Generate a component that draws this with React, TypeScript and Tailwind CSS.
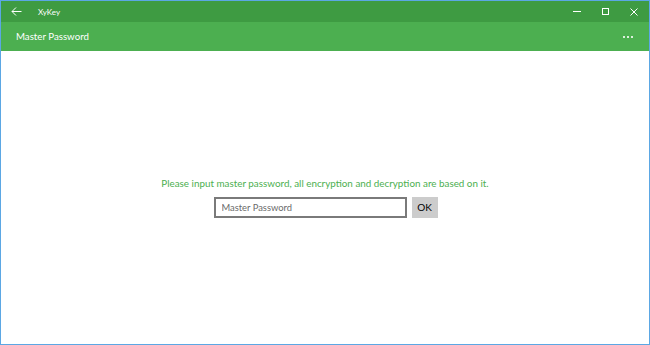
import * as React from 'react';

export default function App() {
  const [pw, setPw] = React.useState('');
  return (
    <div
      className="w-[650px] h-[345px] flex flex-col border border-[#5ba7e4] bg-white overflow-hidden"
      style={{ fontFamily: 'Lato, "Noto Sans", sans-serif' }}
    >
      {/* title bar */}
      <div className="h-[21px] shrink-0 bg-[#3e9b42] flex items-center text-white">
        <div className="w-[30px] flex justify-center pl-[1px]">
          <svg width="11" height="9" viewBox="0 0 11 9" fill="none" stroke="white" strokeWidth="1">
            <path d="M10.5 4.5H1M5 0.5L1 4.5L5 8.5" />
          </svg>
        </div>
        <span className="ml-[7px] text-[8px] leading-none">XyKey</span>
        <div className="ml-auto flex items-center h-full">
          <div className="w-[28px] h-full flex items-center justify-center">
            <div className="w-[8px] h-px bg-white" />
          </div>
          <div className="w-[28px] h-full flex items-center justify-center">
            <div className="w-[7px] h-[7px] border border-white" />
          </div>
          <div className="w-[30px] h-full flex items-center justify-center">
            <svg width="8" height="8" viewBox="0 0 8 8" stroke="white" strokeWidth="1">
              <path d="M0.5 0.5L7.5 7.5M7.5 0.5L0.5 7.5" />
            </svg>
          </div>
        </div>
      </div>
      {/* header */}
      <div className="h-[29px] shrink-0 bg-[#4caf50] flex items-center px-[15px] text-white">
        <span className="text-[9.7px]">Master Password</span>
        <span className="ml-auto flex gap-[2px] pr-[1px]">
          <span className="w-[2px] h-[2px] bg-white/80" />
          <span className="w-[2px] h-[2px] bg-white/80" />
          <span className="w-[2px] h-[2px] bg-white/80" />
        </span>
      </div>
      {/* body */}
      <div className="flex-1 flex flex-col items-center pt-[128px]">
        <p className="text-[9.85px] text-[#4caf50] leading-none mb-[8px]">
          Please input master password, all encryption and decryption are based on it.
        </p>
        <div className="flex items-center gap-[5px] pl-[1px]">
          <input
            value={pw}
            onChange={e => setPw(e.target.value)}
            type="password"
            placeholder="Master Password"
            className="w-[193px] h-[21px] border-2 border-[#7a7a7a] px-[6px] text-[9.4px] text-black placeholder:text-[#6b6b6b] outline-none"
          />
          <button className="w-[26px] h-[21px] bg-[#cccccc] text-[10px] text-black">OK</button>
        </div>
      </div>
    </div>
  );
}
